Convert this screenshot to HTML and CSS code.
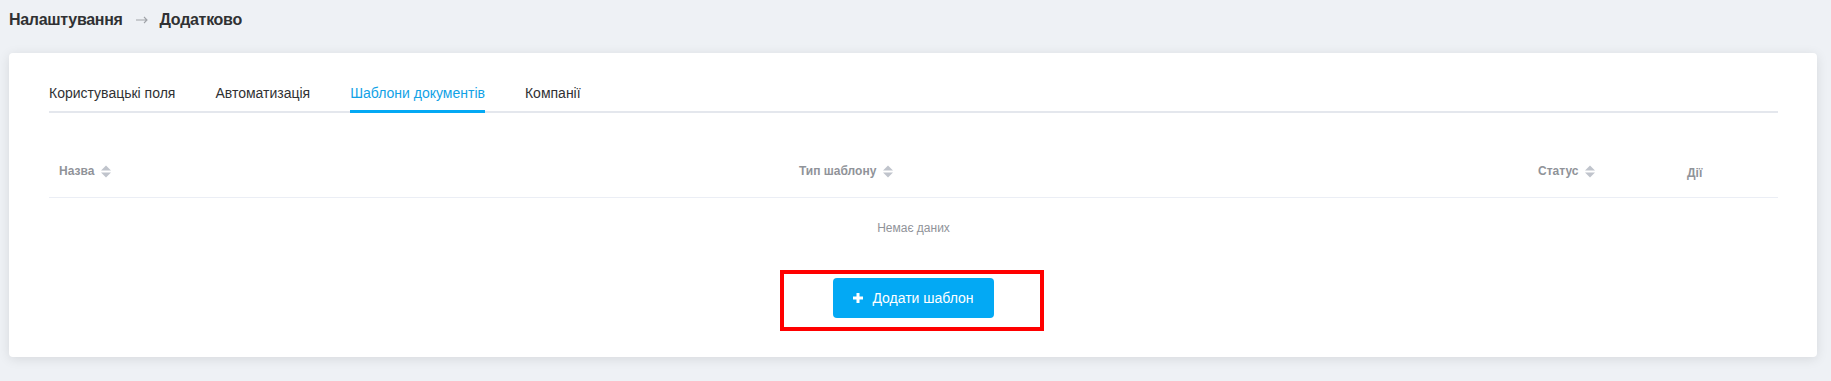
FILE: index.html
```html
<!DOCTYPE html>
<html lang="uk">
<head>
<meta charset="utf-8">
<title>Налаштування — Додатково</title>
<link rel="stylesheet" href="styles.css">
</head>
<body>
<div class="page">
  <div class="breadcrumb">
    <span class="crumb">Налаштування</span>
    <svg class="crumb-sep" viewBox="0 0 12 8" width="12" height="8"><path d="M0 4 H11 M8 1 L11 4 L8 7" fill="none" stroke="#a0a3a8" stroke-width="1.1"/></svg>
    <span class="crumb">Додатково</span>
  </div>
  <div class="card">
    <div class="tabs">
      <div class="tab">Користувацькі поля</div>
      <div class="tab">Автоматизація</div>
      <div class="tab active">Шаблони документів</div>
      <div class="tab">Компанії</div>
    </div>
    <div class="table">
      <div class="thead">
        <div class="th">Назва <svg class="sort" viewBox="0 0 10 13" width="10" height="13"><polygon points="0,5.5 5,0.5 10,5.5"/><polygon points="0,7.5 5,12.5 10,7.5"/></svg></div>
        <div class="th">Тип шаблону <svg class="sort" viewBox="0 0 10 13" width="10" height="13"><polygon points="0,5.5 5,0.5 10,5.5"/><polygon points="0,7.5 5,12.5 10,7.5"/></svg></div>
        <div class="th">Статус <svg class="sort" viewBox="0 0 10 13" width="10" height="13"><polygon points="0,5.5 5,0.5 10,5.5"/><polygon points="0,7.5 5,12.5 10,7.5"/></svg></div>
        <div class="th th-actions">Дії</div>
      </div>
      <div class="empty">Немає даних</div>
    </div>
    <div class="actions">
      <div class="btn-wrap">
        <button class="btn-primary"><svg class="plus" viewBox="0 0 10 10" width="10" height="10"><rect x="3.5" y="0" width="3" height="10"/><rect x="0" y="3.5" width="10" height="3"/></svg>Додати шаблон</button>
        <span class="highlight"></span>
      </div>
    </div>
  </div>
</div>
</body>
</html>
```
FILE: styles.css
```css
* { box-sizing: border-box; }
html, body {
  margin: 0;
  padding: 0;
  background: #eef1f5;
  font-family: "Liberation Sans", Arial, sans-serif;
  color: #303133;
}
.page {
  padding: 0 14px 24px 9px;
}
.breadcrumb {
  height: 40px;
  display: flex;
  align-items: center;
  margin-bottom: 13px;
  font-size: 16px;
  letter-spacing: -0.3px;
  font-weight: 700;
  color: #303133;
}
.crumb-sep {
  margin: 0 12px 0 13px;
  flex: none;
}
.card {
  background: #fff;
  border-radius: 4px;
  box-shadow: 0 2px 12px rgba(0, 0, 0, 0.1);
  padding: 30px 39px 39px 40px;
}
.tabs {
  display: flex;
  gap: 40px;
  border-bottom: 2px solid #e4e7ed;
}
.tab {
  font-size: 14px;
  line-height: 20px;
  padding-bottom: 7px;
  border-bottom: 3px solid transparent;
  margin-bottom: -2px;
  color: #303133;
}
.tab.active {
  color: #11a2e6;
  border-bottom-color: #03a9f4;
}
.table {
  margin-top: 32px;
}
.thead {
  display: grid;
  grid-template-columns: 740px 739px 149px 1fr;
  height: 53px;
  border-bottom: 1px solid #ebeef5;
}
.th {
  display: flex;
  align-items: center;
  gap: 7px;
  padding-left: 10px;
  font-size: 12px;
  font-weight: 700;
  color: #909399;
}
.th-actions {
  padding-top: 4px;
}
.sort {
  fill: #c0c4cc;
  flex: none;
}
.empty {
  text-align: center;
  font-size: 12px;
  line-height: 20px;
  padding: 20px 0 20px;
  color: #909399;
}
.actions {
  display: flex;
  justify-content: center;
  margin-top: 20px;
}
.btn-wrap {
  position: relative;
}
.btn-primary {
  display: flex;
  align-items: center;
  gap: 9px;
  height: 40px;
  width: 161px;
  justify-content: center;
  border: none;
  border-radius: 4px;
  background: #03a9f4;
  color: #fff;
  font-family: "Liberation Sans", Arial, sans-serif;
  font-size: 14px;
  padding: 0 10px;
}
.plus {
  fill: #fff;
  flex: none;
}
.highlight {
  position: absolute;
  left: -53px;
  right: -50px;
  top: -8px;
  bottom: -13px;
  border: 4px solid #ff0000;
  pointer-events: none;
}
```
